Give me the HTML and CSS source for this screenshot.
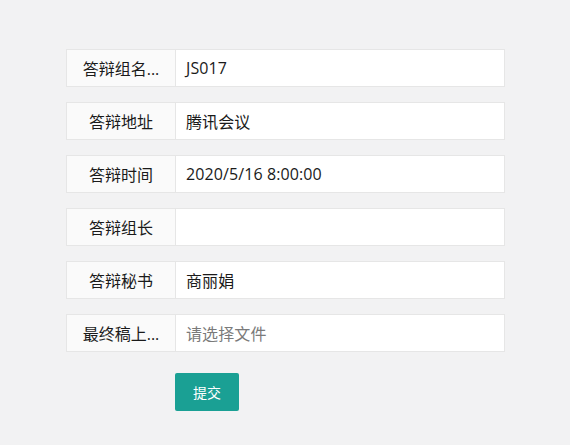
FILE: index.html
```html
<!DOCTYPE html>
<html lang="zh-CN">
<head>
<meta charset="utf-8">
<title>答辩信息</title>
<link rel="stylesheet" href="styles.css">
</head>
<body>
<form class="form">
  <div class="item">
    <label class="label">答辩组名...</label>
    <div class="field">JS017</div>
  </div>
  <div class="item">
    <label class="label">答辩地址</label>
    <div class="field">腾讯会议</div>
  </div>
  <div class="item">
    <label class="label">答辩时间</label>
    <div class="field">2020/5/16 8:00:00</div>
  </div>
  <div class="item">
    <label class="label">答辩组长</label>
    <div class="field"></div>
  </div>
  <div class="item">
    <label class="label">答辩秘书</label>
    <div class="field">商丽娟</div>
  </div>
  <div class="item">
    <label class="label">最终稿上...</label>
    <div class="field placeholder">请选择文件</div>
  </div>
  <div class="actions">
    <button type="button" class="btn">提交</button>
  </div>
</form>
</body>
</html>
```
FILE: styles.css
```css
html, body {
  margin: 0;
  padding: 0;
  background: #f2f2f3;
  font-family: "Open Sans", "Noto Sans CJK SC", "Microsoft YaHei", sans-serif;
  font-size: 16px;
  color: #1a1a1a;
}
.form {
  width: 439px;
  margin: 0 0 0 66px;
  padding-top: 49px;
}
.item {
  display: flex;
  height: 38px;
  margin-bottom: 15px;
}
.label {
  box-sizing: border-box;
  width: 110px;
  flex: none;
  background: #fafafa;
  border: 1px solid #e6e6e6;
  display: flex;
  align-items: center;
  justify-content: center;
  white-space: nowrap;
  color: #1a1a1a;
}
.field {
  box-sizing: border-box;
  flex: 1;
  background: #fff;
  border: 1px solid #e6e6e6;
  border-left: none;
  display: flex;
  align-items: center;
  padding-left: 10px;
  letter-spacing: 0.1px;
  color: #1a1a1a;
}
.placeholder {
  color: #7a7a7a;
}
.actions {
  padding-left: 109px;
  padding-top: 6px;
}
.btn {
  width: 64px;
  height: 38px;
  border: none;
  border-radius: 2px;
  background: #1aa094;
  color: #fff;
  font-family: inherit;
  font-size: 14px;
  padding: 0;
}
```
